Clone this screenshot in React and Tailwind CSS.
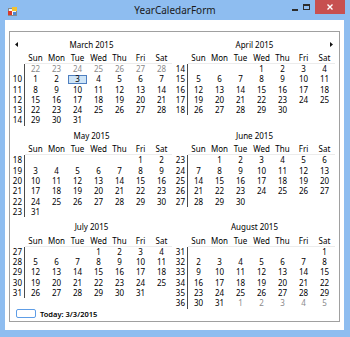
import React from "react";

const DAYS = ["Sun", "Mon", "Tue", "Wed", "Thu", "Fri", "Sat"];

// build week rows for a month, padded to 6 rows
const buildWeeks = (firstDow, nDays, firstWeek, opts = {}) => {
  const rows = [];
  if (opts.lead) rows.push({ wk: "", days: opts.lead.map((d) => ({ d, grey: true })) });
  let cells = Array(firstDow).fill(null);
  let wk = firstWeek;
  for (let d = 1; d <= nDays; d++) {
    cells.push({ d });
    if (cells.length === 7) {
      rows.push({ wk: String(wk++), days: cells });
      cells = [];
    }
  }
  if (cells.length) {
    let next = 1;
    while (cells.length < 7) cells.push(opts.trail ? { d: next++, grey: true } : null);
    rows.push({ wk: String(wk++), days: cells });
  }
  while (rows.length < 6) rows.push(null);
  return rows;
};

const months = [
  { name: "March 2015", prev: true, rows: buildWeeks(0, 31, 10, { lead: [22, 23, 24, 25, 26, 27, 28] }) },
  { name: "April 2015", next: true, rows: buildWeeks(3, 30, 14) },
  { name: "May 2015", rows: buildWeeks(5, 31, 18) },
  { name: "June 2015", rows: buildWeeks(1, 30, 23) },
  { name: "July 2015", rows: buildWeeks(3, 31, 27) },
  { name: "August 2015", rows: buildWeeks(6, 31, 31, { trail: true }) },
];

const Month = ({ month, first }) => (
  <div className="w-[161px]">
    <div className="grid grid-cols-[12px_1fr_12px] h-[15px] items-center">
      <div className="pl-[4px] flex">
        {month.prev && (
          <svg width="3" height="5" viewBox="0 0 3 5">
            <polygon points="3,0 3,5 0,2.5" fill="#111" />
          </svg>
        )}
      </div>
      <div className="text-center text-[8px] text-black">{month.name}</div>
      <div className="pr-[2px] flex justify-end">
        {month.next && (
          <svg width="3" height="5" viewBox="0 0 3 5">
            <polygon points="0,0 0,5 3,2.5" fill="#111" />
          </svg>
        )}
      </div>
    </div>
    <div className="flex">
      <div className="w-[14px]" />
      <div className="flex border-b border-[#ececec]">
        {DAYS.map((d) => (
          <div key={d} className="w-[21px] h-[11px] leading-[11px] text-center text-[8px] text-black">
            {d}
          </div>
        ))}
      </div>
    </div>
    {month.rows.map((row, i) => (
      <div key={i} className="flex h-[10.3px] leading-[10.3px] text-[8px]">
        <div
          className={
            row
              ? "w-[14px] pr-[2px] text-right text-black border-r border-[#4a4a4a]"
              : "w-[14px]"
          }
        >
          {row ? row.wk : ""}
        </div>
        {row &&
          row.days.map((c, j) => (
            <div key={j} className="w-[21px] flex items-center justify-center">
              {c && first && c.d === 3 && !c.grey && i === 1 ? (
                <span className="w-[19px] h-[9px] flex items-center justify-center border border-[#4f7fc0] bg-[#cde4f7] text-black">
                  {c.d}
                </span>
              ) : c ? (
                <span className={c.grey ? "text-[#8a8a8a]" : "text-black"}>{c.d}</span>
              ) : null}
            </div>
          ))}
      </div>
    ))}
  </div>
);

const App = () => {
  return (
    <div className="w-[350px] h-[337px] bg-[#8ebdf0] flex flex-col font-['Noto_Sans',sans-serif]">
      {/* Title bar */}
      <div className="h-[20px] grid grid-cols-[1fr_auto_1fr]">
        <div className="pl-[8px] pt-[7px]">
          <svg width="9" height="9" viewBox="0 0 9 9">
            <rect x="0.5" y="1.5" width="8" height="7" fill="#f4f4f4" stroke="#8a8a8a" strokeWidth="1" />
            <rect x="4" y="0" width="5" height="4" fill="#f2c230" />
            <rect x="0" y="4" width="4" height="4" fill="#d83a2a" />
            <rect x="5" y="5" width="3" height="3" fill="#4a86d4" />
          </svg>
        </div>
        <div className="text-[10px] leading-[20px] text-[#1a1a1a]">YearCaledarForm</div>
        <div className="flex justify-end items-start pr-[5px]">
          <div className="mt-[9px] w-[6px] h-[2px] bg-[#2d2d2d]" />
          <div className="ml-[5px] mt-[4px] w-[7px] h-[6px] border border-t-2 border-[#2d2d2d]" />
          <div className="ml-[5px] w-[30px] h-[14px] bg-[#c75050] flex items-center justify-center">
            <svg width="6" height="6" viewBox="0 0 6 6">
              <path d="M0.5 0.5 L5.5 5.5 M5.5 0.5 L0.5 5.5" stroke="#fff" strokeWidth="1.4" />
            </svg>
          </div>
        </div>
      </div>

      {/* Client area */}
      <div className="ml-[5px] mr-[6px] mb-[7px] flex-1 bg-white pt-[11px] pl-[4px]">
        <div className="w-[331px] h-[291px] border border-[#a0a0a0] bg-white pt-[5px] pl-[1px] flex flex-col">
          <div className="grid grid-cols-[161px_161px] gap-x-[2px] gap-y-[2.6px]">
            {months.map((m, i) => (
              <Month key={m.name} month={m} first={i === 0} />
            ))}
          </div>
          <div className="flex items-center h-[10px] pl-[5px]">
            <div className="w-[20px] h-[9px] border border-[#5e9de6] rounded-[2px]" />
            <span className="ml-[4px] text-[7.5px] font-semibold text-black leading-[10px]">Today: 3/3/2015</span>
          </div>
        </div>
      </div>
    </div>
  );
};

export default App;
